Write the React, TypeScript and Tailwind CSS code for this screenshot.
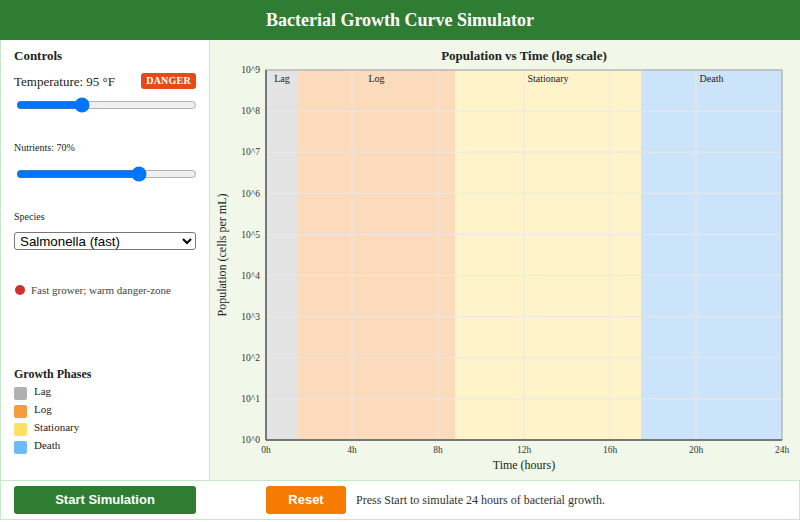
import { useState } from "react"

const phases = [
    { name: "Lag", x0: 0, x1: 32, fill: "#e3e3e3" },
    { name: "Log", x0: 32, x1: 189, fill: "#fbdbbb" },
    { name: "Stationary", x0: 189, x1: 375, fill: "#fef3c9" },
    { name: "Death", x0: 375, x1: 516, fill: "#cce4f9" },
]

const legend = [
    { name: "Lag", color: "bg-[#b0b0b0]" },
    { name: "Log", color: "bg-[#f59c3c]" },
    { name: "Stationary", color: "bg-[#ffe066]" },
    { name: "Death", color: "bg-[#6ebaf6]" },
]

const PLOT_X = 56
const PLOT_Y = 30
const PLOT_W = 516
const PLOT_H = 370

const GrowthChart = () => {
    const decades = Array.from({ length: 10 }, (_, i) => i)
    const hours = [0, 4, 8, 12, 16, 20, 24]

    return (
        <svg width="590" height="440" className="block" style={{ fontFamily: '"Liberation Serif", serif' }}>
            <text x="314" y="20" textAnchor="middle" fontSize="13" fontWeight="bold" fill="#222">
                Population vs Time (log scale)
            </text>

            {phases.map(p => (
                <rect key={p.name} x={PLOT_X + p.x0} y={PLOT_Y} width={p.x1 - p.x0} height={PLOT_H} fill={p.fill} />
            ))}

            {decades.map(d => {
                const y = PLOT_Y + PLOT_H - (PLOT_H / 9) * d
                return <line key={d} x1={PLOT_X} x2={PLOT_X + PLOT_W} y1={y} y2={y} stroke="#e9e9e6" strokeWidth="1" />
            })}
            {hours.map(h => {
                const x = PLOT_X + (PLOT_W / 24) * h
                return <line key={h} x1={x} x2={x} y1={PLOT_Y} y2={PLOT_Y + PLOT_H} stroke="#e9e9e6" strokeWidth="1" />
            })}

            {phases.map(p => (
                <text key={p.name} x={PLOT_X + (p.x0 + p.x1) / 2} y={PLOT_Y + 12} textAnchor="middle" fontSize="10" fill="#222">
                    {p.name}
                </text>
            ))}

            <rect x={PLOT_X} y={PLOT_Y} width={PLOT_W} height={PLOT_H} fill="none" stroke="#9e9e9e" strokeWidth="1" />
            <line x1={PLOT_X} x2={PLOT_X} y1={PLOT_Y} y2={PLOT_Y + PLOT_H} stroke="#777" strokeWidth="2" />
            <line x1={PLOT_X} x2={PLOT_X + PLOT_W} y1={PLOT_Y + PLOT_H} y2={PLOT_Y + PLOT_H} stroke="#777" strokeWidth="2" />

            {decades.map(d => {
                const y = PLOT_Y + PLOT_H - (PLOT_H / 9) * d
                return (
                    <text key={d} x={PLOT_X - 6} y={y + 1} textAnchor="end" fontSize="9.5" fill="#333" dominantBaseline="middle">
                        10^{d}
                    </text>
                )
            })}
            {hours.map(h => (
                <text key={h} x={PLOT_X + (PLOT_W / 24) * h} y={PLOT_Y + PLOT_H + 13} textAnchor="middle" fontSize="9.5" fill="#333">
                    {h}h
                </text>
            ))}

            <text x="314" y="429" textAnchor="middle" fontSize="12" fill="#222">Time (hours)</text>
            <text x="0" y="0" transform="translate(16 215) rotate(-90)" textAnchor="middle" fontSize="12" fill="#222">
                Population (cells per mL)
            </text>
        </svg>
    )
}

const App = () => {
    const [temp, setTemp] = useState(95)
    const [nutrients, setNutrients] = useState(70)

    return (
        <div className="w-[800px] h-[522px] flex flex-col bg-white text-[#222] font-['Liberation_Serif',serif]">
            <header className="h-10 bg-[#2e7d32] flex items-center justify-center">
                <h1 className="text-white font-bold text-[18px]">Bacterial Growth Curve Simulator</h1>
            </header>

            <main className="h-[440px] flex">
                <aside className="w-[210px] border-x border-[#c8e6c9] px-[13px] pt-[6px] flex flex-col">
                    <h2 className="font-bold text-[13px]">Controls</h2>
                    <div className="flex items-center justify-between mt-[6px]">
                        <span className="text-[13px]">Temperature: {temp} °F</span>
                        <span className="bg-[#e64a19] text-white font-bold text-[10px] leading-none px-[5px] py-[3px] rounded-[3px] tracking-wide">
                            DANGER
                        </span>
                    </div>
                    <input
                        type="range"
                        min={32}
                        max={212}
                        value={temp}
                        onChange={e => setTemp(Number(e.target.value))}
                        className="w-[181px] mt-[6px] ml-[2px] accent-[#0075ff]"
                    />

                    <label className="text-[10px] mt-[27px]">Nutrients: {nutrients}%</label>
                    <input
                        type="range"
                        min={0}
                        max={100}
                        value={nutrients}
                        onChange={e => setNutrients(Number(e.target.value))}
                        className="w-[181px] mt-[11px] ml-[2px] accent-[#0075ff]"
                    />

                    <label className="text-[10px] mt-[27px]">Species</label>
                    <select className="mt-[8px] w-[182px] h-[18px] border border-[#767676] rounded-[3px] font-['Liberation_Sans',sans-serif] text-[13.33px] leading-none px-[1px] text-black">
                        <option>Salmonella (fast)</option>
                        <option>E. coli</option>
                        <option>Listeria (cold)</option>
                    </select>

                    <div className="flex items-center gap-[6px] mt-[32px] ml-[1px]">
                        <span className="w-[10px] h-[10px] rounded-full bg-[#d32f2f]" />
                        <span className="text-[11px] text-[#444]">Fast grower; warm danger-zone</span>
                    </div>

                    <div className="mt-auto mb-[27px]">
                        <h3 className="font-bold text-[12px] mb-[3px]">Growth Phases</h3>
                        <ul className="flex flex-col gap-[5px]">
                            {legend.map(l => (
                                <li key={l.name} className="flex items-start gap-[7px] h-[13px]">
                                    <span className={`w-[13px] h-[13px] rounded-[2px] mt-[1px] ${l.color}`} />
                                    <span className="text-[11px] leading-[11px]">{l.name}</span>
                                </li>
                            ))}
                        </ul>
                    </div>
                </aside>

                <section className="flex-1 bg-[#f1f8e9]">
                    <GrowthChart />
                </section>
            </main>

            <footer className="h-10 border border-[#c8e6c9] flex items-center px-[13px] font-['Liberation_Sans',sans-serif]">
                <button className="w-[182px] h-[28px] bg-[#2e7d32] text-white font-bold text-[13px] rounded-[3px]">
                    Start Simulation
                </button>
                <button className="ml-[70px] w-[80px] h-[28px] bg-[#f57c00] text-white font-bold text-[13px] rounded-[3px]">
                    Reset
                </button>
                <span className="ml-[10px] text-[12px] text-[#333] font-['Liberation_Serif',serif]">
                    Press Start to simulate 24 hours of bacterial growth.
                </span>
            </footer>
        </div>
    )
}

export default App
